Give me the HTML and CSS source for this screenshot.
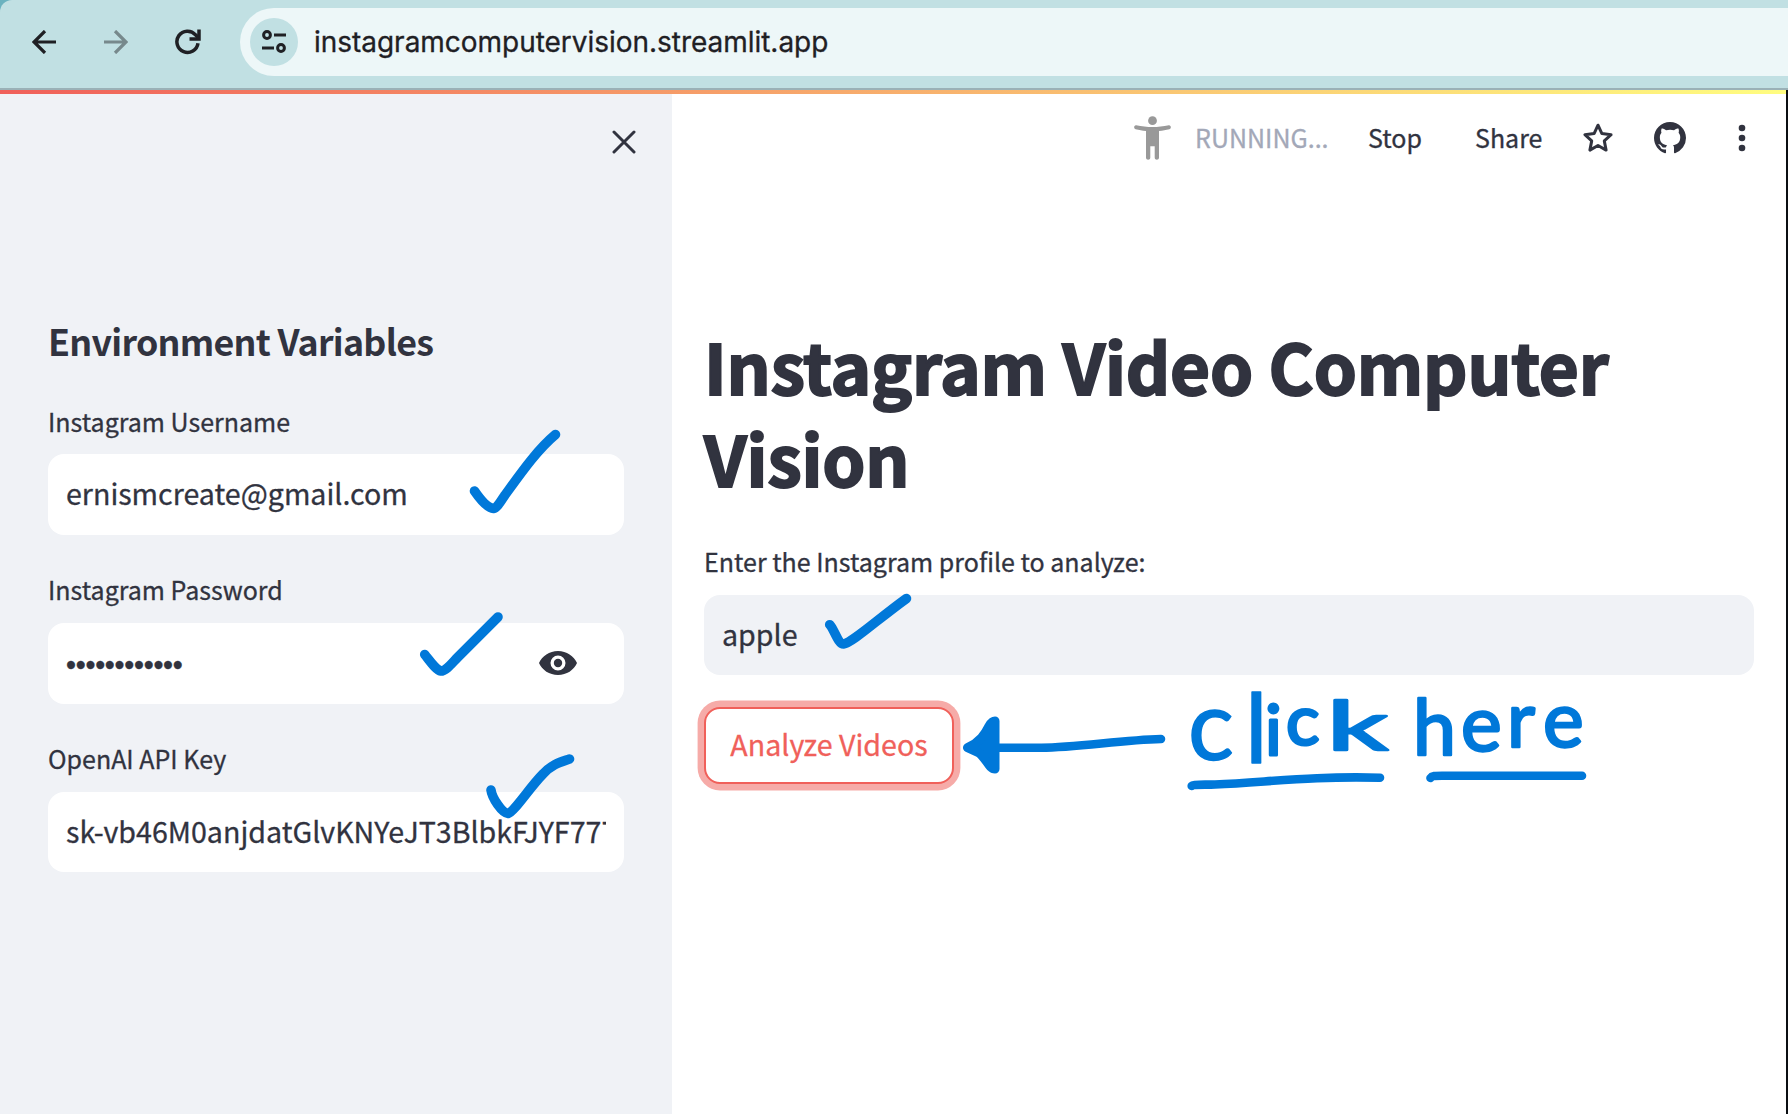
FILE: index.html
```html
<!DOCTYPE html>
<html lang="en">
<head>
<meta charset="utf-8">
<title>Instagram Video Computer Vision</title>
<link rel="stylesheet" href="styles.css">
</head>
<body>
<div class="window">
  <header class="toolbar">
    <svg class="nav-icon back" viewBox="0 0 24 24" width="24" height="24"><path d="M24 12H2M13 1 2 12l11 11"/></svg>
    <svg class="nav-icon forward" viewBox="0 0 24 24" width="24" height="24"><path d="M0 12h22M11 1l11 11-11 11"/></svg>
    <svg class="nav-icon reload" viewBox="0 0 26 26" width="26" height="26"><path d="M23 14.2A10.6 10.6 0 1 1 20.500 5.800L23 8.500"/><path d="M24 .5v9.400H14.500"/></svg>
    <div class="omnibox">
      <span class="site-info">
        <svg viewBox="0 0 24 24" width="24" height="24"><g fill="none" stroke="#1f2024" stroke-width="3"><circle cx="5" cy="5" r="3.4"/><path d="M12 5h12M0 18h12"/><circle cx="19" cy="18" r="3.4"/></g></svg>
      </span>
      <span class="url">instagramcomputervision.streamlit.app</span>
    </div>
  </header>
  <div class="app">
    <div class="decoration"></div>
    <aside class="sidebar">
      <div class="sidebar-top">
        <svg viewBox="0 0 24 24" width="24" height="24"><path d="M2 2l20 20M22 2 2 22" stroke="#31333f" stroke-width="3" stroke-linecap="round"/></svg>
      </div>
      <h2 class="sidebar-title">Environment Variables</h2>
      <div class="fields">
        <div class="field">
          <div class="label">Instagram Username</div>
          <div class="input">ernismcreate@gmail.com</div>
        </div>
        <div class="field">
          <div class="label">Instagram Password</div>
          <div class="input password">
            <span class="dots">••••••••••••</span>
            <svg class="eye" viewBox="0 0 38 26" width="38" height="26"><path fill="#31333f" fill-rule="evenodd" d="M19 1C10.400 1 3 6 0 13c3 7 10.400 12 19 12s16-5 19-12C35 6 27.600 1 19 1Zm0 4.500a7.500 7.500 0 1 1 0 15 7.500 7.500 0 0 1 0-15Z"/><circle cx="19" cy="13" r="4.200" fill="#31333f"/></svg>
          </div>
        </div>
        <div class="field">
          <div class="label">OpenAI API Key</div>
          <div class="input key"><span class="clip">sk-vb46M0anjdatGlvKNYeJT3BlbkFJYF777</span></div>
        </div>
      </div>
    </aside>
    <main class="main">
      <div class="app-header">
        <svg class="runner" viewBox="0 0 38 44" width="38" height="44"><g fill="#999"><circle cx="18.500" cy="4.700" r="4.400"/><path d="M2.200 9.300c11 2.400 21.600 2.400 32.600 0 2.300-.3 2.900 3.400.6 3.900-3.600.8-6.500 1.300-10.400 1.700V41.500c0 2.900-4.300 2.900-4.300 0V30.300h-4.400V41.500c0 2.900-4.300 2.900-4.300 0V14.900c-3.900-.4-6.800-.9-10.400-1.700-2.300-.5-1.700-4.200.6-3.900Z"/></g></svg>
        <span class="status">RUNNING...</span>
        <span class="action stop">Stop</span>
        <span class="action share">Share</span>
        <svg class="star" viewBox="0 0 32 32" width="32" height="32"><path d="M16 3.200l3.900 8.400 9.200 1.100-6.800 6.200 1.800 9.200-8.100-4.600-8.100 4.600 1.800-9.200L2.900 12.700l9.200-1.100Z" fill="none" stroke="#31333f" stroke-width="3" stroke-linejoin="round"/></svg>
        <svg class="github" viewBox="0 0 16 16" width="32" height="32"><path fill="#31333f" d="M8 0C3.580 0 0 3.580 0 8c0 3.540 2.290 6.530 5.470 7.590.4.070.55-.17.55-.38 0-.19-.01-.82-.01-1.490-2.010.37-2.530-.49-2.690-.94-.09-.23-.48-.94-.82-1.130-.28-.15-.68-.52-.01-.53.63-.01 1.080.58 1.230.82.72 1.210 1.870.87 2.330.66.07-.52.28-.87.51-1.070-1.780-.2-3.640-.89-3.640-3.950 0-.87.31-1.590.82-2.150-.08-.2-.36-1.020.08-2.120 0 0 .67-.21 2.200.82.640-.18 1.320-.27 2-.27s1.360.09 2 .27c1.530-1.040 2.200-.82 2.200-.82.44 1.100.16 1.920.08 2.120.51.56.82 1.270.82 2.150 0 3.070-1.870 3.750-3.650 3.950.29.25.54.73.54 1.480 0 1.070-.01 1.930-.01 2.200 0 .21.15.46.55.38A8.010 8.010 0 0 0 16 8c0-4.420-3.580-8-8-8Z"/></svg>
        <svg class="more" viewBox="0 0 8 28" width="8" height="28"><g fill="#31333f"><circle cx="4" cy="4" r="3.300"/><circle cx="4" cy="14" r="3.300"/><circle cx="4" cy="24" r="3.300"/></g></svg>
      </div>
      <div class="content">
        <h1 class="title">Instagram Video Computer<br>Vision</h1>
        <div class="label">Enter the Instagram profile to analyze:</div>
        <div class="input profile">apple</div>
        <button class="analyze">Analyze Videos</button>
      </div>
    </main>
  </div>
  <svg class="ink" viewBox="0 0 1788 1114" width="1788" height="1114">
    <g class="pen tick">
      <path d="M474.500 491C480 499 487 508 493.500 508.500C497 508 501 501 505 495C521 473 537 450 555.500 434.500"/>
      <path d="M424.700 654.500C430 661 436 670 441 671C446 671 452 663 458 657L498 617"/>
      <path d="M491 790C492 798 502 813 508 813.500C514 812 530 787 543 774C552 764 561 762 569.500 759"/>
      <path d="M829.700 624.700C834 629 838 644 843.500 644C852 643 878 619 906.500 598.500"/>
    </g>
    <g class="pen">
      <path d="M995 747.700H1040C1075 748 1120 740 1161 739"/>
      <path d="M1191.700 786C1194 784 1205 785 1215 784.500C1270 782 1310 776 1380 777.700"/>
      <path d="M1430.500 778C1432 775.700 1435 775.700 1442 775.700H1582"/>
    </g>
    <path class="arrow-head" d="M967.500 747.700C980 742 985 734 989 726Q992 721 995 721V769C989 769 986 758 979 753Z"/>
    <text class="hand"><tspan x="1188" y="760" class="large">c</tspan><tspan x="1245" y="763" class="large">l</tspan><tspan x="1265" y="755" class="small">i</tspan><tspan x="1286" y="745" class="small">c</tspan><tspan x="1327" y="750" class="wide" textLength="61" lengthAdjust="spacingAndGlyphs">k</tspan></text>
    <text class="hand"><tspan x="1413" y="755" class="mid">h</tspan><tspan x="1461" y="751" class="mid">e</tspan><tspan x="1507" y="747" class="mid">r</tspan><tspan x="1543" y="747" class="mid">e</tspan></text>
  </svg>
</div>
</body>
</html>
```
FILE: styles.css
```css
* { box-sizing: border-box; }
body { margin: 0; background: #6bb2bf; }
.window {
  position: relative;
  width: 1788px;
  height: 1114px;
  overflow: hidden;
  display: flex;
  flex-direction: column;
  color: #31333f;
  font-family: "Noto Sans CJK SC", "Noto Sans", sans-serif;
  -webkit-text-stroke: .3px;
}
.toolbar {
  height: 90px;
  flex: none;
  display: flex;
  align-items: flex-start;
  background: #c1e0e3;
  border-bottom: 2px solid #9ab1b7;
  border-top-left-radius: 12px;
}
.nav-icon { flex: none; fill: none; stroke: #1f2024; stroke-width: 3.200; margin-top: 30px; }
.back { margin-left: 32px; }
.forward { margin-left: 48px; opacity: .45; }
.reload { margin: 29px 0 0 47px; stroke-width: 3.500; }
.omnibox {
  flex: 1;
  height: 68px;
  margin: 8px 0 0 39px;
  padding-left: 10px;
  display: flex;
  align-items: center;
  background: #edf7f8;
  border-radius: 34px 0 0 34px;
}
.site-info {
  width: 48px;
  height: 48px;
  border-radius: 50%;
  background: #c1e0e3;
  display: flex;
  align-items: center;
  justify-content: center;
}
.url { margin-left: 16px; font: 28px/40px Inter, sans-serif; letter-spacing: -.03px; color: #1f2024; }
.app {
  position: relative;
  flex: 1;
  display: flex;
  background: #fff;
  border-right: 2px solid #0b0e12;
}
.decoration {
  position: absolute;
  inset: 0 0 auto 0;
  height: 4px;
  background: linear-gradient(90deg, #f0605a, #fffd80);
}
.sidebar { width: 672px; flex: none; padding: 4px 48px 0; background: #f0f2f6; }
.sidebar-top { display: flex; justify-content: flex-end; padding-top: 36px; height: 222px; margin-right: -12px; }
.sidebar-title {
  margin: 0;
  font-size: 35.800px;
  line-height: 48px;
  font-weight: 700;
  letter-spacing: -.750px;
  white-space: nowrap;
  -webkit-text-stroke: 0;
}
.fields { display: flex; flex-direction: column; gap: 34px; margin-top: 37px; }
.label { font-size: 25px; line-height: 40px; white-space: nowrap; }
.input {
  height: 81px;
  margin-top: 14px;
  padding: 0 18px 4px;
  display: flex;
  align-items: center;
  background: #fff;
  border-radius: 16px;
  font-size: 28.600px;
  line-height: 44px;
  white-space: nowrap;
}
.field:first-child .input { margin-top: 13px; }
.key { height: 80px; padding-bottom: 3px; }
.clip { overflow: hidden; }
.password { justify-content: space-between; padding: 0 47px 0 18px; }
.dots { font-family: "Liberation Sans", sans-serif; letter-spacing: -.300px; padding-top: 2px; }
.eye { margin-bottom: 2px; }
.main { flex: 1; display: flex; flex-direction: column; padding-top: 4px; }
.app-header { height: 88px; display: flex; align-items: center; padding-left: 462px; font-size: 25px; line-height: 40px; }
.app-header > * { flex: none; }
.status { margin-left: 23px; width: 173px; color: #a3a8b8; }
.status, .action { padding-bottom: 2px; }
.stop { width: 107px; }
.share { width: 107px; }
.github { margin-left: 40px; }
.more { margin-left: 52px; }
.content { padding: 137px 32px 0; display: flex; flex-direction: column; }
.title {
  margin: 0 0 38px;
  font-size: 69px;
  line-height: 92px;
  font-weight: 700;
  letter-spacing: -.150px;
  white-space: nowrap;
  -webkit-text-stroke: 2px;
}
.profile { height: 80px; padding-bottom: 2px; background: #f0f2f6; }
.analyze {
  align-self: flex-start;
  width: 250px;
  height: 77px;
  margin-top: 32px;
  padding: 0 0 4px;
  border: 2px solid #f0605a;
  border-radius: 16px;
  background: #fff;
  box-shadow: 0 0 0 6.400px #f6aba8;
  color: #f0605a;
  font: 28.600px/44px "Noto Sans CJK SC", sans-serif;
  white-space: nowrap;
  -webkit-text-stroke: .3px;
}
/* Pen annotations lie on top of the page */
.ink { position: absolute; inset: 0; }
.pen { fill: none; stroke: #0078d9; stroke-width: 8.600; stroke-linecap: round; stroke-linejoin: round; }
.tick { stroke-width: 9.600; }
.arrow-head { fill: #0078d9; stroke: #0078d9; stroke-width: 9; stroke-linejoin: round; }
.hand {
  font-family: Lato, sans-serif;
  fill: #0078d9;
  stroke: #0078d9;
  stroke-width: 2.500;
  stroke-linejoin: round;
}
.large { font-size: 96px; stroke-width: 1.500; }
.mid { font-size: 77px; }
.small { font-size: 70px; stroke-width: 3; }
.wide { font-size: 68px; }
```
